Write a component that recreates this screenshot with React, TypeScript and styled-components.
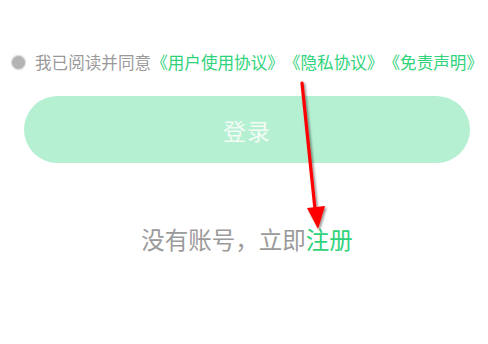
import React from 'react';
import styled, { createGlobalStyle } from 'styled-components';

const GlobalStyle = createGlobalStyle`
  html, body {
    margin: 0;
    padding: 0;
    background: #ffffff;
    font-family: "Noto Sans CJK SC", "Noto Sans", sans-serif;
  }
`;

const Page = styled.div`
  position: relative;
  width: 488px;
  height: 344px;
  display: flex;
  flex-direction: column;
  align-items: stretch;
  padding: 51px 0 0 12px;
  box-sizing: border-box;
  overflow: hidden;
`;

const AgreeRow = styled.div`
  display: flex;
  align-items: center;
  height: 22px;
  white-space: nowrap;
  font-size: 16.6px;
  color: #9a9a9a;
`;

const Radio = styled.span`
  width: 13px;
  height: 13px;
  border-radius: 50%;
  background: #b4b4b4;
  box-shadow: 0 0 1.5px 1px #d6d6d6;
  margin-right: 10px;
  flex-shrink: 0;
`;

const Link = styled.span`
  color: #2fd37a;
`;

const LoginButton = styled.button`
  margin: 23px 0 0 12px;
  width: 446px;
  height: 67px;
  border: none;
  border-radius: 34px;
  background: #b5f0d2;
  color: #f2fbf6;
  font-family: inherit;
  font-size: 23px;
  letter-spacing: 1px;
`;

const RegisterLine = styled.div`
  margin-top: 60px;
  width: 470px;
  text-align: center;
  font-size: 23.5px;
  line-height: 32px;
  color: #9a9a9a;
`;

const Arrow = styled.svg`
  position: absolute;
  left: 0;
  top: 0;
  pointer-events: none;
  overflow: visible;
`;

export default function App() {
  return (
    <>
      <GlobalStyle />
      <Page>
        <AgreeRow>
          <Radio />
          我已阅读并同意
          <Link>《用户使用协议》</Link>
          <Link>《隐私协议》</Link>
          <Link>《免责声明》</Link>
        </AgreeRow>
        <LoginButton>登录</LoginButton>
        <RegisterLine>
          没有账号，立即<Link>注册</Link>
        </RegisterLine>
        <Arrow width="488" height="344">
          <defs>
            <filter id="sh" x="-50%" y="-50%" width="200%" height="200%">
              <feDropShadow dx="1.5" dy="1.5" stdDeviation="1.2" floodColor="#000" floodOpacity="0.45" />
            </filter>
          </defs>
          <g filter="url(#sh)">
            <line x1="302" y1="83" x2="315.5" y2="214" stroke="#ff0000" strokeWidth="3.2" strokeLinecap="round" />
            <polygon points="307,208 325,206 318,229" fill="#ff0000" />
          </g>
        </Arrow>
      </Page>
    </>
  );
}
